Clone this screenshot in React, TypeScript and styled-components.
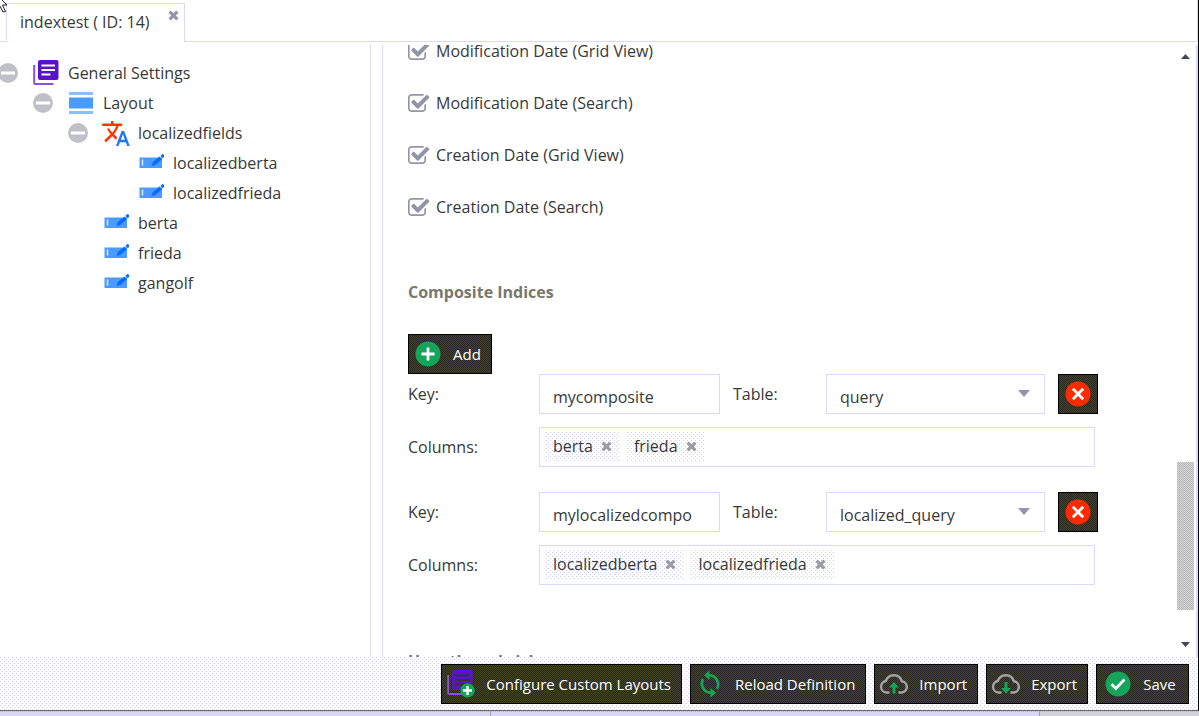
import React from 'react';
import styled, { createGlobalStyle, css } from 'styled-components';

const line = '#d9d9fb';
const dots = css`
  background-color: #ffffff;
  background-image: conic-gradient(from 270deg at 1px 1px, #ccccff 90deg, transparent 0),
    conic-gradient(from 270deg at 1px 1px, #ccccff 90deg, transparent 0);
  background-size: 4px 4px;
  background-position: 0 0, 2px 2px;
`;

const GlobalStyle = createGlobalStyle`
  *, *::before, *::after { box-sizing: border-box; }
  body { margin: 0; background: #fff; color: #383838; overflow: hidden; }
  body, button, input, select { font-family: 'Open Sans', sans-serif; font-size: 16px; line-height: 24px; }
  svg { display: block; flex: none; }
`;

const Page = styled.div`
  display: flex;
  flex-direction: column;
  height: 100vh;
  overflow: hidden;
`;

const Window = styled.div`
  flex: 1;
  min-height: 0;
  display: flex;
  flex-direction: column;
  border-right: 1px solid #000;
  border-bottom: 1px solid #6b6b60;
`;

const TabBar = styled.header`
  display: flex;
  height: 42px;
  padding-top: 3px;
  border-right: 1px solid ${line};
`;

const TabEdge = styled.div<{ $grow?: boolean }>`
  width: 6px;
  flex: ${(p) => (p.$grow ? '1' : 'none')};
  border-bottom: 1px solid ${line};
`;

const Tab = styled.div`
  display: flex;
  align-items: flex-start;
  gap: 18px;
  padding: 6px 5px 0 13px;
  border: 1px solid ${line};
  border-bottom: 0;
  white-space: nowrap;
`;

const IconButton = styled.button`
  display: flex;
  padding: 0;
  border: 0;
  background: none;
  color: #9494a8;
`;

const Body = styled.div`
  flex: 1;
  min-height: 0;
  display: flex;
  gap: 11px;
  margin-top: 3px;
  border-right: 2px solid ${line};
`;

const Tree = styled.nav`
  flex: none;
  width: 371px;
  padding-top: 13px;
  overflow: hidden;
  border-right: 1px solid ${line};
`;

const TreeRow = styled.div<{ $level: number }>`
  display: flex;
  align-items: center;
  height: 30px;
  padding-left: ${(p) => p.$level * 35}px;
`;

const Expander = styled.div`
  flex: none;
  width: 33px;
  button { margin-left: -2px; }
`;

const TreeIcon = styled.div`
  flex: none;
  width: 26px;
  margin-right: 9px;
  display: flex;
  justify-content: center;
`;

const Content = styled.main`
  flex: 1;
  min-width: 0;
  display: flex;
  overflow: hidden;
  padding-right: 2px;
  border-left: 1px solid ${line};
`;

const Form = styled.form`
  flex: 1;
  min-width: 0;
  margin-top: -20px;
  padding-left: 25px;
`;

const CheckLabel = styled.label`
  display: flex;
  align-items: center;
  gap: 6px;
  height: 52px;
  position: relative;
  input {
    position: absolute;
    width: 22px;
    height: 18px;
    margin: 0;
    opacity: 0;
  }
`;

const Heading = styled.h2<{ $close?: boolean }>`
  margin: 0;
  padding: ${(p) => (p.$close ? 39 : 47)}px 0 30px;
  font-size: 16px;
  line-height: 24px;
  font-weight: 700;
  color: #78786c;
`;

const DarkButton = styled.button<{ $square?: boolean }>`
  display: flex;
  align-items: center;
  justify-content: center;
  gap: 12px;
  height: 40px;
  width: ${(p) => (p.$square ? '40px' : 'auto')};
  padding: ${(p) => (p.$square ? '0' : '0 10px 0 6px')};
  border: 1px solid #000;
  color: #fff;
  font-size: 15px;
  white-space: nowrap;
  background: repeating-conic-gradient(#42422e 0 25%, #292922 0 50%) 0 0 / 2px 2px;
`;

const ButtonIcon = styled.span`
  width: 26px;
  display: flex;
  justify-content: center;
`;

const IndexSet = styled.fieldset`
  display: grid;
  grid-template-columns: 131px 181px 106px 219px 53px;
  row-gap: 13px;
  align-items: center;
  margin: 0 0 25px;
  padding: 0;
  border: 0;
  > :nth-child(3) { padding-left: 13px; }
  > :nth-child(5) { margin-left: 13px; }
`;

const TextField = styled.input`
  width: 100%;
  height: 40px;
  padding: 5px 13px 0;
  border: 1px solid ${line};
  color: inherit;
  background: #fff;
`;

const SelectWrap = styled.div`
  position: relative;
  svg { position: absolute; right: 15px; top: 16px; pointer-events: none; }
`;

const Select = styled.select`
  appearance: none;
  width: 100%;
  height: 40px;
  padding: 5px 30px 0 13px;
  border: 1px solid ${line};
  border-radius: 0;
  color: inherit;
  background: #fff;
`;

const TagBox = styled.div`
  grid-column: 2 / -1;
  display: flex;
  align-items: center;
  gap: 7px;
  width: 556px;
  height: 40px;
  padding: 0 6px 2px;
  border: 1px solid ${line};
  input { flex: 1; min-width: 0; border: 0; padding: 0; background: none; }
`;

const Tag = styled.span`
  display: flex;
  align-items: center;
  gap: 8px;
  height: 29px;
  padding: 0 8px 0 7px;
  ${dots}
  button { color: #9c9ca6; }
`;

const ScrollTrack = styled.div`
  flex: none;
  width: 17px;
  display: flex;
  flex-direction: column;
  align-items: center;
  padding: 9px 0 10px;
`;

const Thumb = styled.div`
  flex: 148;
  width: 17px;
  background: repeating-conic-gradient(#b8b8b4 0 25%, #d4d4d8 0 50%) 0 0 / 2px 2px;
`;

const TrackSpace = styled.div<{ $share: number }>`
  flex: ${(p) => p.$share};
`;

const Footer = styled.footer`
  flex: none;
  display: flex;
  justify-content: flex-end;
  gap: 8px;
  height: 53px;
  padding: 7px 9px 0;
  ${dots}
  button { min-width: 93px; }
`;

const StatusStrip = styled.div`
  flex: none;
  display: grid;
  grid-template-columns: 491fr 549fr 159fr;
  height: 5px;
  background: #d8d8f6;
  > * { border-right: 1px solid #a0a0a8; border-top: 1px dotted #b8b8b0; }
  > :last-child { border-right: 0; background: #d2d2de; }
`;

const Pointer = styled.svg`
  position: absolute;
  left: 0;
  top: 0;
`;

const Cross = ({ size = 11 }: { size?: number }) => (
  <svg width={size} height={size} viewBox="0 0 11 11">
    <path d="M1.6 1.6l7.8 7.8M9.4 1.6L1.6 9.4" stroke="currentColor" strokeWidth="3.2" />
  </svg>
);

const MinusIcon = () => (
  <svg width="20" height="20" viewBox="0 0 20 20">
    <circle cx="10" cy="10" r="10" fill="#c0c0c8" />
    <rect x="3" y="8.500" width="14" height="3" fill="#fff" />
  </svg>
);

const Pages = () => (
  <>
    <path d="M1.2 5v18.2q0 .8.8.8h18.500" fill="none" stroke="#8a4fe0" strokeWidth="2" />
    <rect x="5" y="0" width="20.500" height="20" rx="2" fill="#5a14c8" />
  </>
);

const SettingsIcon = () => (
  <svg width="26" height="26" viewBox="0 0 26 26">
    <Pages />
    <path d="M8.500 5.500h13.500M8.500 10h13.500M8.500 14.500h9" stroke="#fff" strokeWidth="2" />
  </svg>
);

const LayoutIcon = () => (
  <svg width="24" height="24" viewBox="0 0 24 24">
    <path d="M0 1h24v3H0zM0 20h24v3H0z" fill="#85c0ff" />
    <path d="M0 6.500h24v11H0z" fill="#4a9bff" />
  </svg>
);

const TranslateIcon = () => (
  <svg width="28" height="25" viewBox="1 2 22 20">
    <path
      fill="#ff3300"
      d="M12.870 15.070l-2.540-2.510.03-.03c1.740-1.940 2.980-4.170 3.710-6.530H17V4h-7V2H8v2H1v1.990h11.170C11.500 7.920 10.440 9.750 9 11.350 8.070 10.320 7.300 9.190 6.690 8h-2c.73 1.630 1.730 3.170 2.980 4.560l-5.090 5.020L4 19l5-5 3.110 3.110.76-2.040z"
    />
    <path fill="#1a75ff" d="M18.500 10h-2L12 22h2l1.120-3h4.750L21 22h2l-4.500-12zm-2.620 7l1.620-4.330L19.120 17h-3.240z" />
  </svg>
);

const FieldIcon = () => (
  <svg width="26" height="20" viewBox="-1 1 26 20">
    <rect x="0.5" y="5.500" width="22.500" height="10.500" fill="#4a9bff" />
    <path d="M3.500 7.500v6" stroke="#d8eaff" strokeWidth="1.500" />
    <path d="M12.500 14l1.200-3.700 6.800-5.700 2.500 2.700-6.800 5.700zM21.400 3.900l1.700-1.700q.6-.5 1.200 0l1.100 1.200q.5.6 0 1.200L23.800 6.300z" fill="#0a6cff" />
  </svg>
);

const CheckIcon = () => (
  <svg width="22" height="18" viewBox="64 128 1664 1408" preserveAspectRatio="xMinYMid meet">
    <path
      fill="#9494a8"
      d="M1472 930v318q0 119-84.500 203.500t-203.500 84.500h-832q-119 0-203.500-84.500t-84.500-203.500v-832q0-119 84.500-203.500t203.500-84.500h832q63 0 117 25 15 7 18 23 3 17-9 29l-49 49q-10 10-23 10-3 0-9-2-23-6-45-6h-832q-66 0-113 47t-47 113v832q0 66 47 113t113 47h832q66 0 113-47t47-113v-254q0-13 9-22l64-64q10-10 23-10 6 0 12 3 20 8 20 29zm231-489l-814 814q-24 24-57 24t-57-24l-430-430q-24-24-24-57t24-57l110-110q24-24 57-24t57 24l263 263 647-647q24-24 57-24t57 24l110 110q24 24 24 57t-24 57z"
    />
  </svg>
);

const Disc = ({ fill, path }: { fill: string; path: string }) => (
  <svg width="26" height="26" viewBox="0 0 26 26">
    <circle cx="13" cy="13" r="12.500" fill={fill} />
    <path d={path} fill="none" stroke="#fff" strokeWidth="2.800" />
  </svg>
);

const green = '#14a55a';
const AddIcon = () => <Disc fill={green} path="M13 6.500v13M6.500 13h13" />;
const RemoveIcon = () => <Disc fill="#ff2a00" path="M7.800 7.800l10.400 10.400M18.200 7.800L7.800 18.200" />;
const SaveIcon = () => <Disc fill={green} path="M6.500 13.300l4.300 4.200 8.700-8.900" />;

const ConfigureIcon = () => (
  <svg width="28" height="28" viewBox="0 0 28 28">
    <Pages />
    <path d="M8.500 5.500h13.500M8.500 10h13.500M8.500 14.500h9" stroke="#33332a" strokeWidth="2" />
    <circle cx="20.500" cy="20.500" r="7.200" fill={green} />
    <path d="M20.500 16v9M16 20.500h9" stroke="#fff" strokeWidth="2.400" />
  </svg>
);

const ReloadIcon = () => (
  <svg width="26" height="28" viewBox="0 0 26 28">
    <g fill="none" stroke={green} strokeWidth="2.600">
      <path d="M12 5.200a9.200 9.200 0 0 1 8 13.600" />
      <path d="M14 22.800a9.200 9.200 0 0 1-8-13.600" />
    </g>
    <path d="M12.500.3v9.800L7 5.200zM13.500 17.900v9.800l5.500-4.900z" fill={green} />
  </svg>
);

const CloudIcon = ({ down }: { down?: boolean }) => (
  <svg width="30" height="22" viewBox="0 0 30 22">
    <path
      d="M10.500 19.500H7.300a5.800 5.800 0 0 1-.4-11.500A8.300 8.300 0 0 1 22.800 8.200a5.700 5.700 0 0 1 .2 11.300h-3.500"
      fill="none"
      stroke="#a3a3ad"
      strokeWidth="2.400"
    />
    <path d={down ? 'M13.500 9h3v6h3.500l-5 5.500-5-5.500h3.500z' : 'M13.500 20.500h3v-6h3.500l-5-5.500-5 5.500h3.500z'} fill={green} />
  </svg>
);

const Arrow = ({ up }: { up?: boolean }) => (
  <svg width="9" height="5" viewBox="0 0 9 5">
    <path d={up ? 'M0 5h9L4.500 0z' : 'M0 0h9L4.500 5z'} fill="#45454f" />
  </svg>
);

const tree = [
  { level: 0, name: 'General Settings', icon: <SettingsIcon />, open: true },
  { level: 1, name: 'Layout', icon: <LayoutIcon />, open: true },
  { level: 2, name: 'localizedfields', icon: <TranslateIcon />, open: true },
  { level: 3, name: 'localizedberta', icon: <FieldIcon /> },
  { level: 3, name: 'localizedfrieda', icon: <FieldIcon /> },
  { level: 2, name: 'berta', icon: <FieldIcon /> },
  { level: 2, name: 'frieda', icon: <FieldIcon /> },
  { level: 2, name: 'gangolf', icon: <FieldIcon /> },
];

const checks = [
  'Modification Date (Grid View)',
  'Modification Date (Search)',
  'Creation Date (Grid View)',
  'Creation Date (Search)',
];

const indices = [
  { key: 'mycomposite', table: 'query', columns: ['berta', 'frieda'] },
  { key: 'mylocalizedcompo', table: 'localized_query', columns: ['localizedberta', 'localizedfrieda'] },
];

const actions = [
  { label: 'Configure Custom Layouts', icon: <ConfigureIcon /> },
  { label: 'Reload Definition', icon: <ReloadIcon /> },
  { label: 'Import', icon: <CloudIcon /> },
  { label: 'Export', icon: <CloudIcon down /> },
  { label: 'Save', icon: <SaveIcon /> },
];

export default function App() {
  return (
    <Page>
      <GlobalStyle />
      <Window>
        <TabBar>
          <TabEdge />
          <Tab>
            indextest ( ID: 14)
            <IconButton type="button" aria-label="Close tab"><Cross /></IconButton>
          </Tab>
          <TabEdge $grow />
        </TabBar>
        <Body>
          <Tree>
            {tree.map((n) => (
              <TreeRow key={n.name} $level={n.level}>
                <Expander>
                  {n.open && <IconButton type="button" aria-label={`Collapse ${n.name}`}><MinusIcon /></IconButton>}
                </Expander>
                <TreeIcon>{n.icon}</TreeIcon>
                {n.name}
              </TreeRow>
            ))}
          </Tree>
          <Content>
            <Form>
              {checks.map((c) => (
                <CheckLabel key={c}>
                  <input type="checkbox" defaultChecked />
                  <CheckIcon />
                  {c}
                </CheckLabel>
              ))}
              <Heading>Composite Indices</Heading>
              <DarkButton type="button"><ButtonIcon><AddIcon /></ButtonIcon>Add</DarkButton>
              {indices.map((x) => (
                <IndexSet key={x.key}>
                  <label htmlFor={`key-${x.key}`}>Key:</label>
                  <TextField id={`key-${x.key}`} defaultValue={x.key} />
                  <label htmlFor={`table-${x.key}`}>Table:</label>
                  <SelectWrap>
                    <Select id={`table-${x.key}`} defaultValue={x.table}>
                      <option>query</option>
                      <option>localized_query</option>
                    </Select>
                    <svg width="12" height="7" viewBox="0 0 12 7"><path d="M0 0h12L6 7z" fill="#9494b0" /></svg>
                  </SelectWrap>
                  <DarkButton type="button" $square aria-label="Remove index"><RemoveIcon /></DarkButton>
                  <label htmlFor={`columns-${x.key}`}>Columns:</label>
                  <TagBox>
                    {x.columns.map((c) => (
                      <Tag key={c}>
                        {c}
                        <IconButton type="button" aria-label={`Remove ${c}`}><Cross /></IconButton>
                      </Tag>
                    ))}
                    <input id={`columns-${x.key}`} />
                  </TagBox>
                </IndexSet>
              ))}
              <Heading $close>Uses these bricks</Heading>
            </Form>
            <ScrollTrack>
              <Arrow up />
              <TrackSpace $share={403} />
              <Thumb />
              <TrackSpace $share={32} />
              <Arrow />
            </ScrollTrack>
          </Content>
        </Body>
        <Footer>
          {actions.map((a) => (
            <DarkButton key={a.label} type="button"><ButtonIcon>{a.icon}</ButtonIcon>{a.label}</DarkButton>
          ))}
        </Footer>
      </Window>
      <StatusStrip><div /><div /><div /></StatusStrip>
      <Pointer width="9" height="13" viewBox="0 0 9 13">
        <path d="M-4 -6L7 5H2.500L5.500 11.500L3 12L0 6L-3 9z" fill="#fff" stroke="#222" />
      </Pointer>
    </Page>
  );
}
